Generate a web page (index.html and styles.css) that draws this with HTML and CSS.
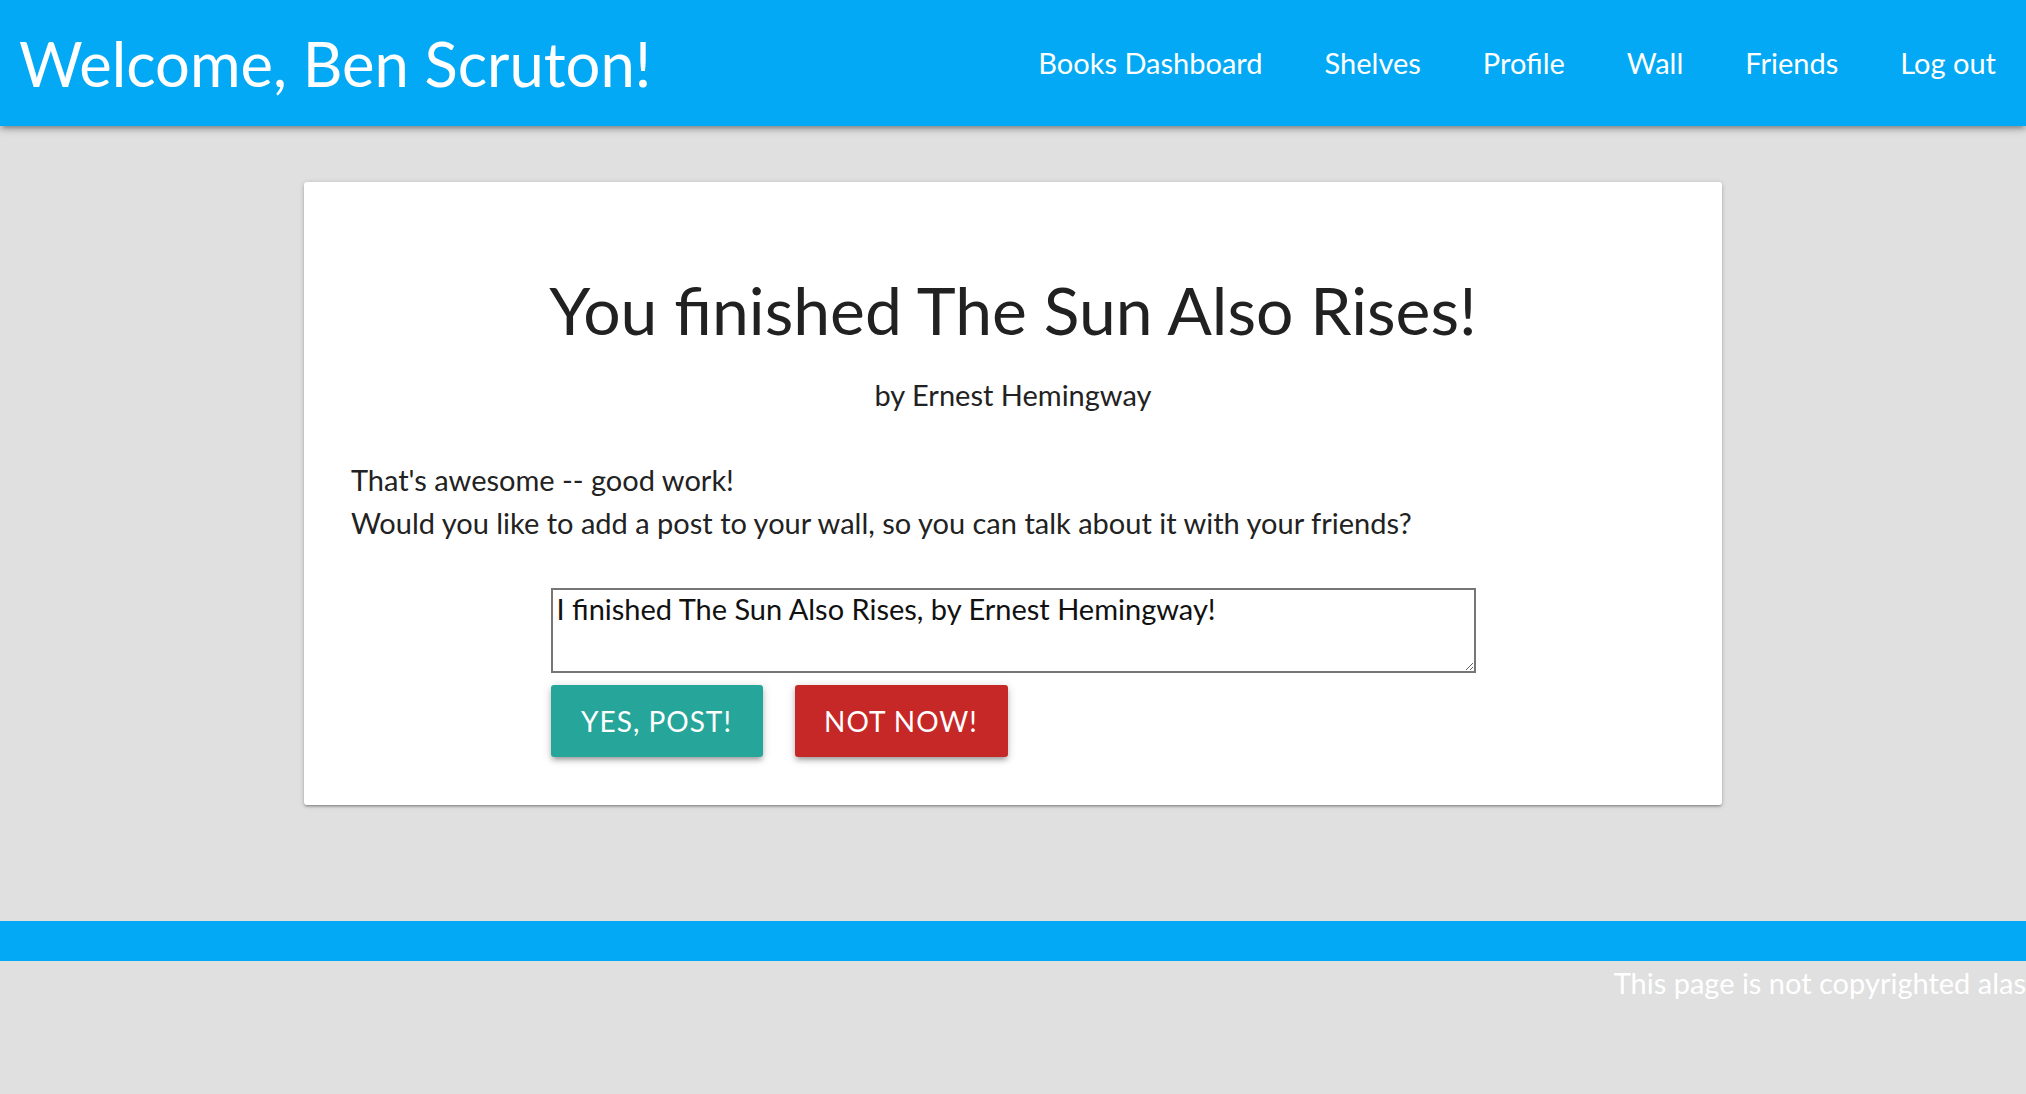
FILE: index.html
```html
<!DOCTYPE html>
<html lang="en">
<head>
<meta charset="utf-8">
<title>Finished book</title>
<link rel="stylesheet" href="styles.css">
</head>
<body>
<header class="topbar">
  <a class="brand" href="#">Welcome, Ben Scruton!</a>
  <nav class="nav">
    <a href="#">Books Dashboard</a>
    <a href="#">Shelves</a>
    <a href="#">Profile</a>
    <a href="#">Wall</a>
    <a href="#">Friends</a>
    <a href="#">Log out</a>
  </nav>
</header>

<main class="container">
  <section class="card">
    <h1 class="card-title">You finished The Sun Also Rises!</h1>
    <p class="author">by Ernest Hemingway</p>
    <p class="message">That's awesome -- good work!<br>Would you like to add a post to your wall, so you can talk about it with your friends?</p>
    <form class="post-form">
      <textarea class="post-text">I finished The Sun Also Rises, by Ernest Hemingway!</textarea>
      <div class="actions">
        <button type="button" class="btn btn-yes">Yes, post!</button>
        <button type="button" class="btn btn-no">Not now!</button>
      </div>
    </form>
  </section>
</main>

<footer class="footer">
  <div class="footer-bar"></div>
  <p class="footer-text">This page is not copyrighted alas</p>
</footer>
</body>
</html>
```
FILE: styles.css
```css
html {
  background: #e0e0e0;
}
body {
  margin: 0;
  font-family: "Lato", "Noto Sans", sans-serif;
  color: #222;
  background: #e0e0e0;
  overflow-x: hidden;
}
.topbar {
  height: 126px;
  background: #03a9f4;
  display: flex;
  align-items: center;
  justify-content: space-between;
  box-shadow: 0 4px 4px 0 rgba(0,0,0,.14), 0 6px 2px -4px rgba(0,0,0,.12), 0 2px 10px 0 rgba(0,0,0,.2);
  position: relative;
  z-index: 1;
}
.brand {
  color: #fff;
  text-decoration: none;
  font-size: 61.5px;
  line-height: 126px;
  padding-left: 19px;
}
.nav {
  display: flex;
}
.nav a {
  color: #fff;
  text-decoration: none;
  font-size: 29px;
  line-height: 126px;
  padding: 0 31px;
}
.nav a:last-child {
  padding-right: 30px;
}
.container {
  width: 70%;
  margin: 56px auto 0;
}
.card {
  background: #fff;
  border-radius: 3px;
  padding: 88px 47px 48px;
  box-shadow: 0 2px 2px 0 rgba(0,0,0,.14), 0 3px 1px -2px rgba(0,0,0,.12), 0 1px 5px 0 rgba(0,0,0,.2);
}
.card-title {
  margin: 0;
  font-weight: 400;
  font-size: 66px;
  line-height: 1.2;
  text-align: center;
  color: #212121;
}
.author {
  margin: 24px 0 0;
  font-size: 29px;
  line-height: 1.5;
  text-align: center;
}
.message {
  margin: 41px 0 0;
  font-size: 29px;
  line-height: 1.5;
}
.post-form {
  width: 925px;
  margin: 43px auto 0;
}
.post-text {
  display: block;
  box-sizing: border-box;
  width: 925px;
  height: 85px;
  margin: 0;
  border: 2px solid #767676;
  border-radius: 0;
  padding: 2px 4px 0;
  font-family: "Lato", "Noto Sans", sans-serif;
  font-size: 29px;
  line-height: 1.2;
  color: #111;
  background: #fff;
}
.actions {
  display: flex;
  gap: 32px;
  margin-top: 12px;
}
.btn {
  height: 72px;
  width: 212px;
  border: none;
  border-radius: 3px;
  color: #fff;
  font-family: "Lato", "Noto Sans", sans-serif;
  font-size: 28px;
  letter-spacing: 1px;
  text-transform: uppercase;
  box-shadow: 0 4px 4px 0 rgba(0,0,0,.14), 0 6px 2px -4px rgba(0,0,0,.12), 0 2px 10px 0 rgba(0,0,0,.2);
  cursor: pointer;
}
.btn-yes {
  background: #26a69a;
}
.btn-no {
  width: 213px;
  background: #c62828;
}
.footer {
  margin-top: 116px;
}
.footer-bar {
  height: 40px;
  background: #03a9f4;
}
.footer-text {
  margin: 0;
  font-size: 29px;
  line-height: 1.5;
  text-align: right;
  color: #fff;
  white-space: nowrap;
  padding-bottom: 90px;
}
```
